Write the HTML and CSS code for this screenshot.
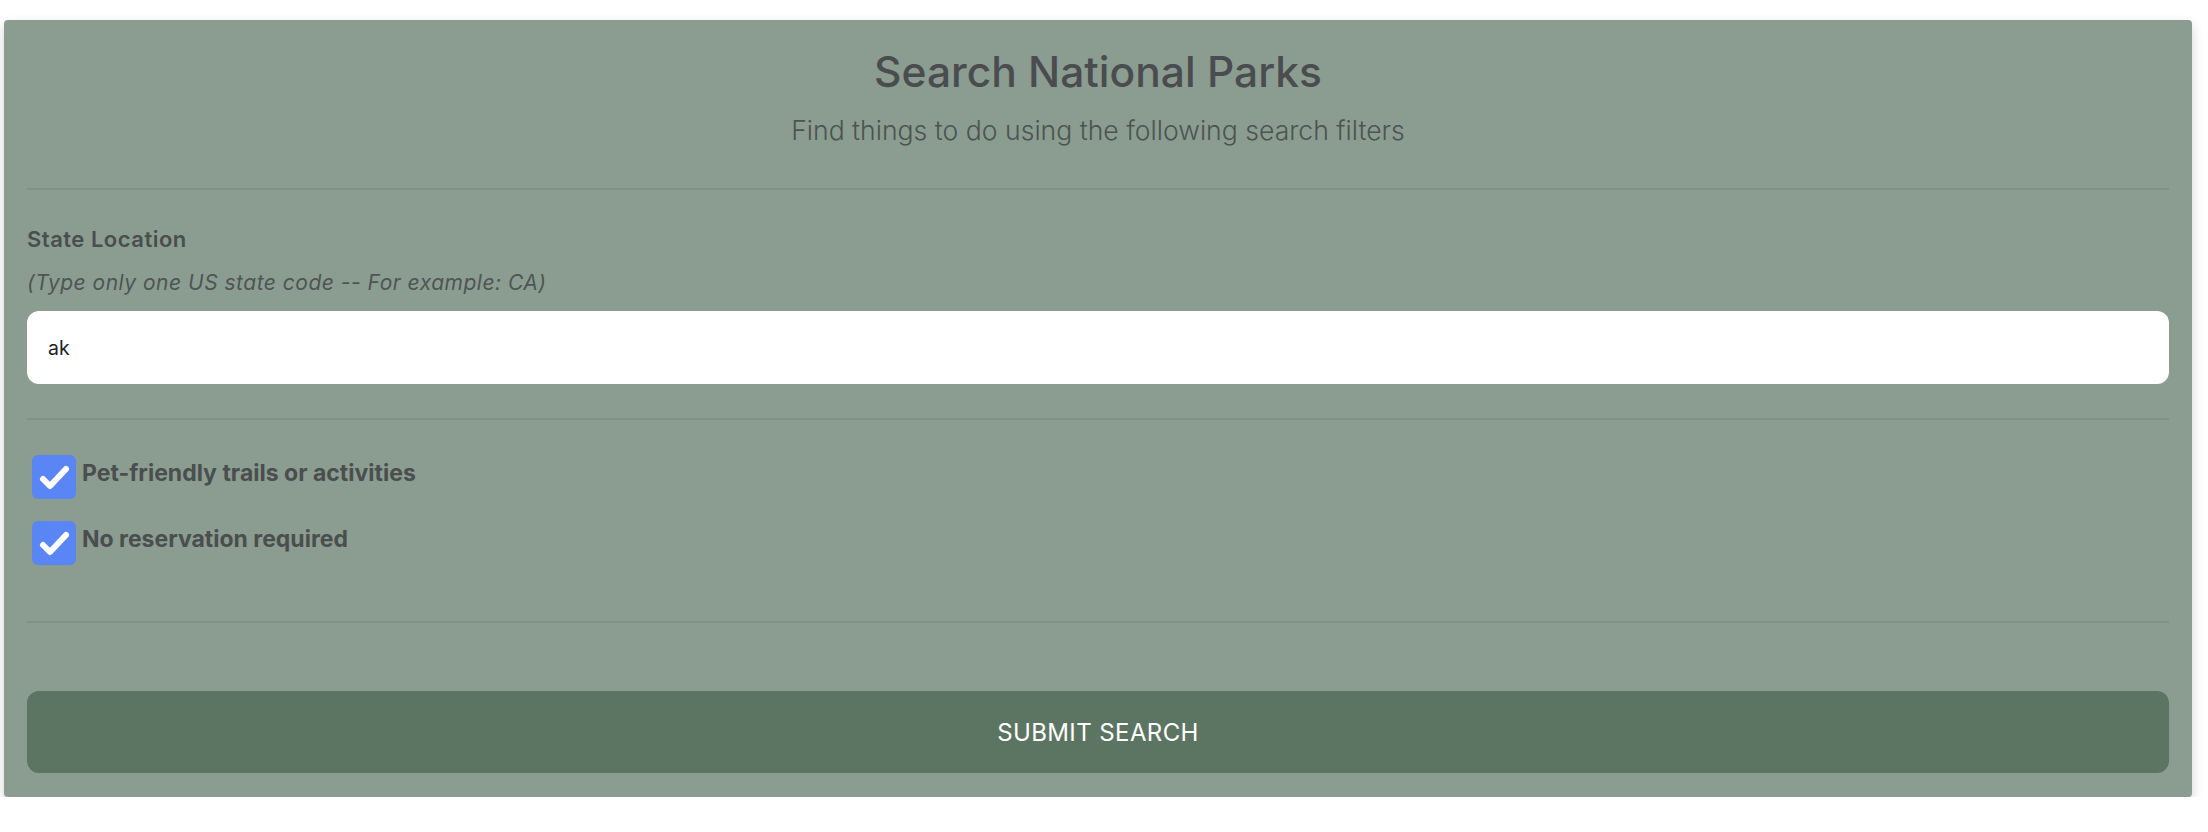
FILE: index.html
```html
<!DOCTYPE html>
<html lang="en">
<head>
<meta charset="utf-8">
<title>Search National Parks</title>
<link rel="stylesheet" href="styles.css">
</head>
<body>
<form class="card">
  <header class="card-header">
    <h1 class="title">Search National Parks</h1>
    <p class="subtitle">Find things to do using the following search filters</p>
  </header>
  <hr class="divider">
  <section class="field">
    <label class="field-label" for="state">State Location</label>
    <p class="field-hint">(Type only one US state code -- For example: CA)</p>
    <div class="text-input" id="state">ak</div>
  </section>
  <hr class="divider">
  <section class="checks">
    <div class="check-row">
      <span class="check-box"><svg viewBox="0 0 44 44" width="44" height="44"><path d="M11 24 L18 31 L34 14" fill="none" stroke="#fff" stroke-width="6" stroke-linecap="round" stroke-linejoin="round"/></svg></span>
      <span class="check-label">Pet-friendly trails or activities</span>
    </div>
    <div class="check-row">
      <span class="check-box"><svg viewBox="0 0 44 44" width="44" height="44"><path d="M11 24 L18 31 L34 14" fill="none" stroke="#fff" stroke-width="6" stroke-linecap="round" stroke-linejoin="round"/></svg></span>
      <span class="check-label">No reservation required</span>
    </div>
  </section>
  <hr class="divider divider-last">
  <button class="submit" type="button">SUBMIT SEARCH</button>
</form>
</body>
</html>
```

FILE: styles.css
```css
* { box-sizing: border-box; }

html, body {
  margin: 0;
  padding: 0;
  background: #ffffff;
}

body {
  padding: 20px 16px 0 4px;
  font-family: Inter, "Noto Sans", "Liberation Sans", sans-serif;
  color: #4a4e4e;
}

.card {
  display: flex;
  flex-direction: column;
  background: #8a9d90;
  border-radius: 4px;
  padding: 26px 23px 24px 23px;
  box-shadow: 0 5px 12px rgba(0, 0, 0, 0.18);
}

.card-header {
  display: flex;
  flex-direction: column;
  align-items: center;
}

.title {
  margin: 0;
  font-size: 42.5px;
  line-height: 52px;
  font-weight: 500;
  color: #4a4c4f;
}

.subtitle {
  margin: 15px 0 0 0;
  font-size: 26.6px;
  line-height: 34px;
  font-weight: 300;
  color: #4d5352;
}

.divider {
  margin: 41px 0 0 0;
  border: 0;
  height: 2px;
  background: #7f9285;
}

.field {
  display: flex;
  flex-direction: column;
  padding-top: 36px;
}

.field-label {
  font-size: 22px;
  line-height: 26px;
  font-weight: 600;
  letter-spacing: 0.5px;
  color: #4a4e4e;
}

.field-hint {
  margin: 18px 0 0 0;
  font-size: 21px;
  line-height: 26px;
  font-style: italic;
  letter-spacing: 0.5px;
  color: #4f5555;
}

.text-input {
  margin-top: 15px;
  height: 73px;
  background: #ffffff;
  border-radius: 12px;
  padding: 0 21px;
  display: flex;
  align-items: center;
  font-size: 19.5px;
  color: #222222;
}

.field + .divider { margin-top: 34px; }

.checks {
  display: flex;
  flex-direction: column;
  gap: 22px;
  padding-top: 35px;
}

.check-row {
  display: flex;
  align-items: flex-start;
  gap: 6px;
  padding-left: 5px;
}

.check-box {
  width: 44px;
  height: 44px;
  flex: none;
  background: #5a85f4;
  border-radius: 6px;
  display: block;
}

.check-box svg { display: block; }

.check-label {
  padding-top: 5px;
  font-size: 23px;
  line-height: 27px;
  font-weight: 700;
  color: #4a4e4e;
}

.divider-last { margin-top: 56px; }

.submit {
  margin-top: 68px;
  height: 82px;
  border: 0;
  border-radius: 12px;
  background: #5c7563;
  color: #ffffff;
  font-family: Inter, "Noto Sans", "Liberation Sans", sans-serif;
  font-size: 24px;
  letter-spacing: 0.4px;
  font-weight: 400;
  cursor: pointer;
}
```
